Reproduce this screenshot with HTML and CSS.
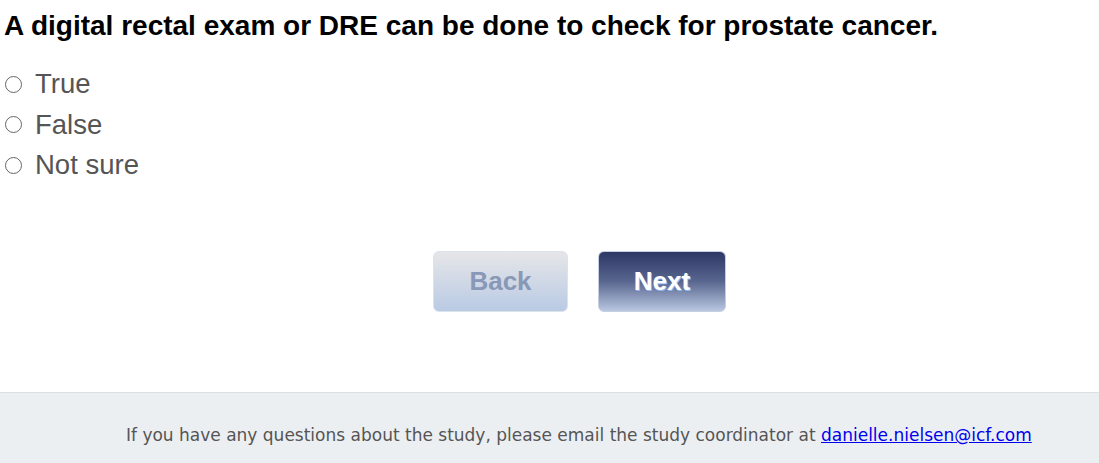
FILE: index.html
```html
<!DOCTYPE html>
<html lang="en">
<head>
  <meta charset="UTF-8">
  <meta name="viewport" content="width=device-width, initial-scale=1.0">
  <title>Survey Question</title>
  <link rel="stylesheet" href="styles.css">
</head>
<body>
  <main class="question">
    <h2 class="question-text">A digital rectal exam or DRE can be done to check for prostate cancer.</h2>
    <ul class="options">
      <li class="option"><span class="radio"></span>True</li>
      <li class="option"><span class="radio"></span>False</li>
      <li class="option"><span class="radio"></span>Not sure</li>
    </ul>
    <div class="nav-buttons">
      <button class="btn btn-back">Back</button>
      <button class="btn btn-next">Next</button>
    </div>
  </main>

  <footer class="footer">
    If you have any questions about the study, please email the study coordinator at <a href="#">danielle.nielsen@icf.com</a>
  </footer>
</body>
</html>
```

FILE: styles.css
```css
body {
  margin: 0;
  font-family: "Liberation Sans", Arial, sans-serif;
  background: white;
  color: #555;
}

.question {
  padding: 10px 4px 0;
  height: 382px;
}

.question-text {
  margin: 0 0 22px;
  font-size: 28px;
  font-weight: bold;
  color: #000;
  line-height: 32px;
}

.options {
  list-style: none;
  margin: 0;
  padding: 0;
}

.option {
  display: flex;
  align-items: center;
  font-size: 27.5px;
  line-height: 40px;
  height: 40.5px;
  color: #555;
}

.radio {
  flex-shrink: 0;
  width: 15px;
  height: 15px;
  border: 1.4px solid #666;
  border-radius: 50%;
  margin: 0 13px 0 1px;
}

.nav-buttons {
  display: flex;
  justify-content: center;
  gap: 30px;
  margin-top: 65px;
  padding-left: 60px;
}

.btn {
  height: 61px;
  border-radius: 6px;
  font-family: "Liberation Sans", Arial, sans-serif;
  font-size: 26px;
  font-weight: bold;
  cursor: pointer;
}

.btn-back {
  width: 135px;
  border: 1px solid #dde3ec;
  background: linear-gradient(to bottom, #e6e6e8, #b9cae4);
  color: #8898b6;
}

.btn-next {
  width: 128px;
  border: 1px solid #c6cfe0;
  background: linear-gradient(to bottom, #2d3864, #59668f 50%, #b9c7e1);
  color: white;
  text-shadow: 1px 1px 0 #8fb8f5;
}

.footer {
  border-top: 1px solid #dcdfe3;
  background: #eceff2;
  height: 71px;
  box-sizing: border-box;
  padding: 32px 0 0 126px;
  font-family: "DejaVu Sans", Verdana, sans-serif;
  font-size: 17px;
  color: #555;
}

.footer a {
  color: #0000ee;
}
```
